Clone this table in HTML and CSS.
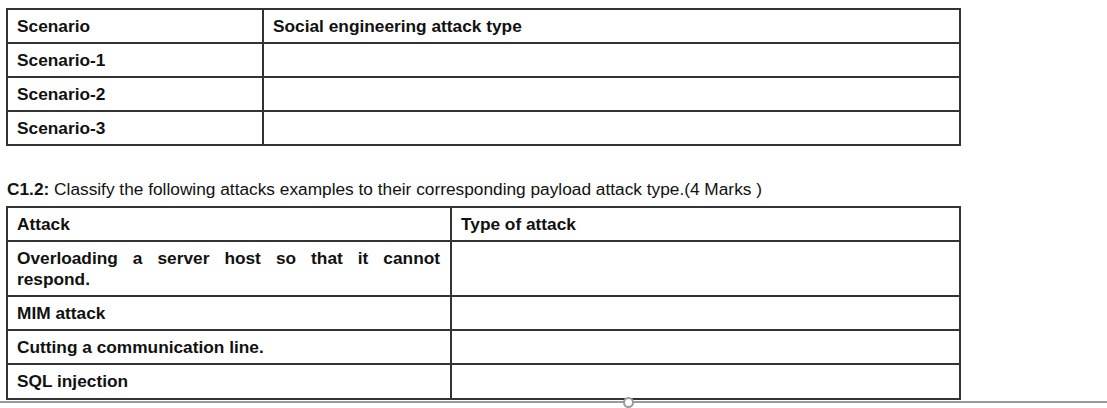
FILE: index.html
```html
<!DOCTYPE html>
<html>
<head>
<meta charset="utf-8">
<link rel="stylesheet" href="styles.css">
</head>
<body>
<div class="page">
  <table class="grid grid-a">
    <colgroup><col class="col-a1"><col></colgroup>
    <tr><td>Scenario</td><td>Social engineering attack type</td></tr>
    <tr><td>Scenario-1</td><td></td></tr>
    <tr><td>Scenario-2</td><td></td></tr>
    <tr><td>Scenario-3</td><td></td></tr>
  </table>
  <p class="question"><b>C1.2:</b> Classify the following attacks examples to their corresponding payload attack type.(4 Marks )</p>
  <table class="grid grid-b">
    <colgroup><col class="col-b1"><col></colgroup>
    <tr><td>Attack</td><td>Type of attack</td></tr>
    <tr><td class="just">Overloading a server host so that it cannot respond.</td><td></td></tr>
    <tr><td>MIM attack</td><td></td></tr>
    <tr><td>Cutting a communication line.</td><td></td></tr>
    <tr><td>SQL injection</td><td></td></tr>
  </table>
</div>
<div class="pagebreak"><span class="handle"></span></div>
</body>
</html>
```
FILE: styles.css
```css
html, body {
  margin: 0;
  padding: 0;
  background: #fff;
  height: 408px;
  overflow: hidden;
}
body {
  font-family: "Liberation Sans", Arial, sans-serif;
  color: #111;
  position: relative;
}
.page {
  padding: 8px 0 0 6px;
  height: 393px;
  overflow: hidden;
}
.grid {
  border-collapse: collapse;
  width: 955px;
  table-layout: fixed;
}
.grid td {
  border: 2px solid #333;
  padding: 6px 10px 5px 9px;
  font-size: 17.3px;
  line-height: 21px;
  font-weight: bold;
  vertical-align: top;
  height: 21px;
}
.grid-b tr:last-child td { padding-bottom: 6px; }
.col-a1 { width: 256px; }
.col-b1 { width: 444px; }
.just { text-align: justify; }
.question {
  margin: 33px 0 7px 1px;
  font-size: 17.3px;
  line-height: 20px;
}
.question b { font-weight: bold; }
.pagebreak {
  position: absolute;
  left: 0;
  right: 0;
  top: 401px;
  border-top: 2px solid #9a9a9a;
}
.handle {
  position: absolute;
  left: 623px;
  top: -6px;
  width: 7px;
  height: 7px;
  border: 2px solid #9a9a9a;
  border-radius: 50%;
  background: #fff;
}
```
